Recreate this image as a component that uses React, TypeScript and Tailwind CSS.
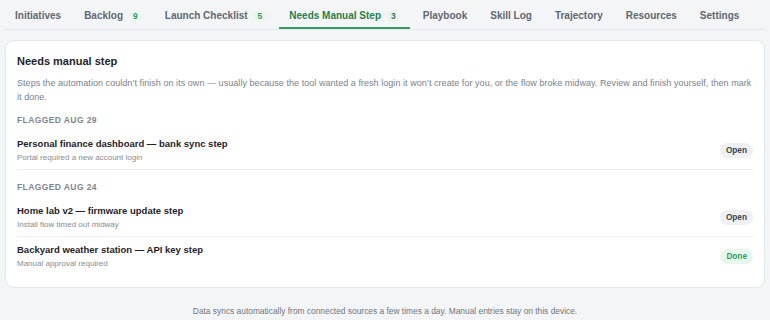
import React from 'react';

const tabs: Array<{ label: string; count?: number }> = [
  { label: 'Initiatives' },
  { label: 'Backlog', count: 9 },
  { label: 'Launch Checklist', count: 5 },
  { label: 'Needs Manual Step', count: 3 },
  { label: 'Playbook' },
  { label: 'Skill Log' },
  { label: 'Trajectory' },
  { label: 'Resources' },
  { label: 'Settings' },
];

interface Step {
  title: string;
  note: string;
  status: 'Open' | 'Done';
}

const groups: Array<{ date: string; steps: Step[] }> = [
  {
    date: 'Flagged Aug 29',
    steps: [
      {
        title: 'Personal finance dashboard — bank sync step',
        note: 'Portal required a new account login',
        status: 'Open',
      },
    ],
  },
  {
    date: 'Flagged Aug 24',
    steps: [
      {
        title: 'Home lab v2 — firmware update step',
        note: 'Install flow timed out midway',
        status: 'Open',
      },
      {
        title: 'Backyard weather station — API key step',
        note: 'Manual approval required',
        status: 'Done',
      },
    ],
  },
];

export default function App() {
  const active = 'Needs Manual Step';

  return (
    <div
      className="min-h-[320px] bg-[#f4f5f7] px-[5px] pt-[4px]"
      style={{ fontFamily: '"Liberation Sans", Arial, sans-serif' }}
    >
      {/* Tabs */}
      <div className="flex gap-[3px] border-b border-[#e4e7eb]">
        {tabs.map((tab) => (
          <button
            key={tab.label}
            className={`flex h-[25px] items-center gap-[6px] border-b-2 px-[10px] text-[10px] font-bold whitespace-nowrap ${
              tab.label === active
                ? 'border-[#2f9e5f] text-[#25804c]'
                : 'border-transparent text-[#5f6873]'
            }`}
          >
            {tab.label}
            {tab.count !== undefined && (
              <span
                className={`rounded-full px-[4px] text-[8.5px] leading-[12px] font-bold ${
                  tab.label === active
                    ? 'bg-[#eef1f0] text-[#25804c]'
                    : 'bg-[#eaf6ee] text-[#2f9e5f]'
                }`}
              >
                {tab.count}
              </span>
            )}
          </button>
        ))}
      </div>

      {/* Card */}
      <div className="mt-[10px] rounded-[9px] border border-[#e4e7eb] bg-white px-[11px] pt-[11px] pb-[12px]">
        <h2 className="text-[11px] leading-[18px] font-bold text-[#1f2329]">
          Needs manual step
        </h2>
        <p className="mt-[6px] text-[9px] leading-[14px] tracking-[0.05px] text-[#7a828c]">
          Steps the automation couldn’t finish on its own — usually because the tool wanted a fresh
          login it won’t create for you, or the flow broke midway. Review and finish yourself, then
          mark it done.
        </p>

        {groups.map((group, gi) => (
          <div key={group.date} className={gi === 0 ? 'mt-[10px]' : 'mt-[11px]'}>
            <div className="text-[8.5px] leading-[12px] font-bold tracking-[0.4px] text-[#7f868f] uppercase">
              {group.date}
            </div>
            <div className="mt-[5px]">
              {group.steps.map((step, si) => (
                <div
                  key={step.title}
                  className={`flex items-center justify-between pt-[6px] pb-[5px] ${
                    si < group.steps.length - 1 || gi === 0 ? 'border-b border-[#eceef1]' : ''
                  }`}
                >
                  <div>
                    <div className="text-[9.5px] leading-[14px] font-bold text-[#1f2329]">
                      {step.title}
                    </div>
                    <div className="mt-[1px] text-[8px] leading-[12px] text-[#858c95]">
                      {step.note}
                    </div>
                  </div>
                  <span
                    className={`rounded-full px-[6px] text-[8.25px] leading-[15px] font-bold ${
                      step.status === 'Done'
                        ? 'bg-[#e8f7ee] text-[#2f9e5f]'
                        : 'bg-[#eef0f3] text-[#3d444d]'
                    }`}
                  >
                    {step.status}
                  </span>
                </div>
              ))}
            </div>
          </div>
        ))}
      </div>

      <p className="mt-[17px] text-center text-[8.4px] text-[#6f7680]">
        Data syncs automatically from connected sources a few times a day. Manual entries stay on
        this device.
      </p>
    </div>
  );
}
